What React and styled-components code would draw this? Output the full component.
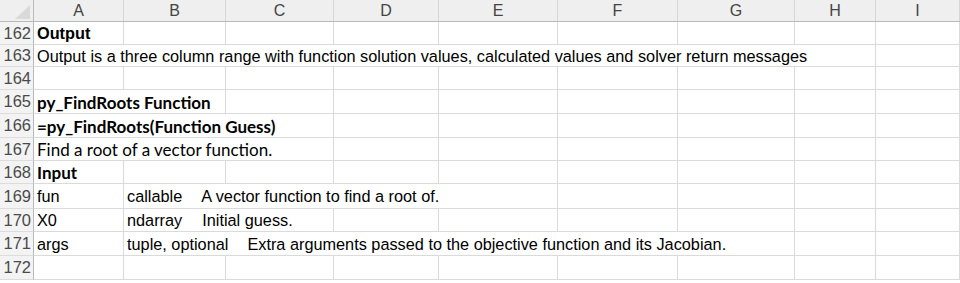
import React from "react";
import styled, { createGlobalStyle } from "styled-components";

const Global = createGlobalStyle`
  html, body { margin: 0; padding: 0; background: #ffffff; }
  body { width: 960px; height: 283px; overflow: hidden; }
`;

const COLS = "34px 90px 102px 108px 105px 119px 120px 117px 81px 1fr";

const Sheet = styled.div`
  width: 960px;
  height: 283px;
  overflow: hidden;
  background: #fff;
  display: flex;
  flex-direction: column;
`;

const HeaderRow = styled.div`
  display: grid;
  grid-template-columns: ${COLS};
  height: 22px;
  flex: none;
  background: #efefef;
  border-bottom: 1px solid #b9b9b9;
  box-sizing: border-box;
`;

const Corner = styled.div`
  position: relative;
  border-right: 1px solid #b9b9b9;
  box-sizing: border-box;
`;

const CornerMark = styled.svg`
  position: absolute;
  right: 3px;
  bottom: 2px;
`;

const ColHead = styled.div`
  display: flex;
  align-items: center;
  justify-content: center;
  border-right: 1px solid #d6d6d6;
  box-sizing: border-box;
  font-family: "Liberation Sans", Arial, sans-serif;
  font-size: 16px;
  color: #444;
  padding-top: 1px;
`;

const Row = styled.div`
  display: grid;
  grid-template-columns: ${COLS};
  height: ${(p) => p.$h}px;
  flex: none;
`;

const RowNum = styled.div`
  display: flex;
  align-items: center;
  justify-content: flex-end;
  padding-right: 2px;
  background: #f3f3f3;
  border-right: 1px solid #b9b9b9;
  border-bottom: 1px solid #dcdcdc;
  box-sizing: border-box;
  font-family: "Liberation Sans", Arial, sans-serif;
  font-size: 16.5px;
  color: #4a4a4a;
`;

const Cell = styled.div`
  grid-column: span ${(p) => p.$span || 1};
  display: flex;
  align-items: center;
  padding-left: 3px;
  padding-top: 1px;
  border-right: 1px solid #dadada;
  border-bottom: 1px solid #dadada;
  box-sizing: border-box;
  white-space: pre;
  overflow: visible;
  font-family: ${(p) =>
    p.$calibri ? 'Lato, "Open Sans", sans-serif' : '"Liberation Sans", Arial, sans-serif'};
  font-size: ${(p) => (p.$calibri ? "17px" : "16.3px")};
  font-weight: ${(p) => (p.$bold ? 700 : 400)};
  color: #000;
`;

const Desc = styled.span`
  margin-left: ${(p) => p.$gap}px;
`;

const letters = ["A", "B", "C", "D", "E", "F", "G", "H", "I"];

const rows = [
  { n: 162, h: 23, cells: [{ t: "Output", bold: true }] },
  {
    n: 163,
    h: 22,
    cells: [
      {
        t: "Output is a three column range with function solution values, calculated values and solver return messages",
        span: 8,
      },
    ],
  },
  { n: 164, h: 23, cells: [] },
  { n: 165, h: 24, cells: [{ t: "py_FindRoots Function", bold: true, calibri: true, span: 2 }] },
  { n: 166, h: 24, cells: [{ t: "=py_FindRoots(Function Guess)", bold: true, calibri: true, span: 3 }] },
  { n: 167, h: 23, cells: [{ t: "Find a root of a vector function.", calibri: true, span: 3 }] },
  { n: 168, h: 23, cells: [{ t: "Input", bold: true, calibri: true }] },
  {
    n: 169,
    h: 25,
    cells: [
      { t: "fun" },
      { t: "callable", desc: "A vector function to find a root of.", gap: 19, span: 4 },
    ],
  },
  {
    n: 170,
    h: 23,
    cells: [{ t: "X0" }, { t: "ndarray", desc: "Initial guess.", gap: 20, span: 2 }],
  },
  {
    n: 171,
    h: 24,
    cells: [
      { t: "args" },
      {
        t: "tuple, optional",
        desc: "Extra arguments passed to the objective function and its Jacobian.",
        gap: 19,
        span: 6,
      },
    ],
  },
  { n: 172, h: 24, cells: [] },
];

function SheetRow({ row }) {
  const used = row.cells.reduce((s, c) => s + (c.span || 1), 0);
  const blanks = Array.from({ length: Math.max(0, 9 - used) });
  return (
    <Row $h={row.h}>
      <RowNum>{row.n}</RowNum>
      {row.cells.map((c, i) => (
        <Cell key={i} $span={c.span} $bold={c.bold} $calibri={c.calibri}>
          {c.t}
          {c.desc && <Desc $gap={c.gap}>{c.desc}</Desc>}
        </Cell>
      ))}
      {blanks.map((_, i) => (
        <Cell key={"b" + i} />
      ))}
    </Row>
  );
}

export default function App() {
  return (
    <>
      <Global />
      <Sheet>
        <HeaderRow>
          <Corner>
            <CornerMark width="15" height="14" viewBox="0 0 15 14">
              <polygon points="15,0 15,14 0,14" fill="#d9d9d9" />
            </CornerMark>
          </Corner>
          {letters.map((l) => (
            <ColHead key={l}>{l}</ColHead>
          ))}
        </HeaderRow>
        {rows.map((r) => (
          <SheetRow key={r.n} row={r} />
        ))}
      </Sheet>
    </>
  );
}
